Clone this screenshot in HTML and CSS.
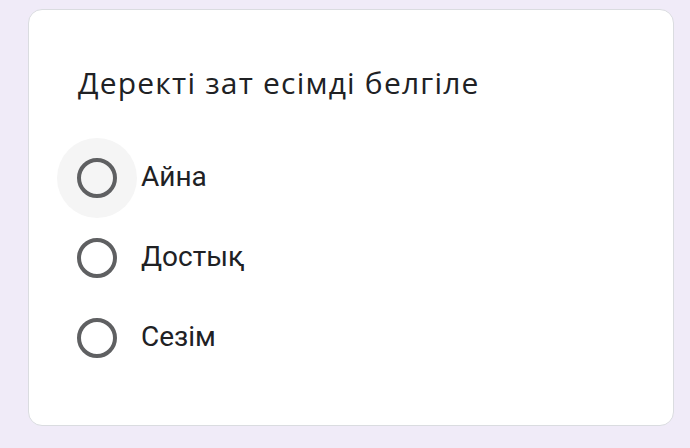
FILE: index.html
```html
<!DOCTYPE html>
<html lang="kk">
<head>
<meta charset="utf-8">
<link rel="stylesheet" href="styles.css">
</head>
<body>
<div class="card">
  <div class="title">Деректі зат есімді белгіле</div>
  <div class="options">
    <div class="option">
      <div class="halo hover"><span class="radio"></span></div>
      <span class="label">Айна</span>
    </div>
    <div class="option">
      <div class="halo"><span class="radio"></span></div>
      <span class="label">Достық</span>
    </div>
    <div class="option">
      <div class="halo"><span class="radio"></span></div>
      <span class="label">Сезім</span>
    </div>
  </div>
</div>
</body>
</html>
```

FILE: styles.css
```css
html, body {
  margin: 0;
  padding: 0;
}
body {
  background: #f0ebf8;
  width: 690px;
  height: 448px;
  overflow: hidden;
  padding-top: 9px;
  box-sizing: border-box;
}
.card {
  box-sizing: border-box;
  margin-left: 28px;
  width: 646px;
  height: 417px;
  background: #ffffff;
  border: 1px solid #dadce0;
  border-radius: 14px;
  padding: 53px 0 0 28px;
}
.title {
  font-family: "Open Sans", "Noto Sans", sans-serif;
  font-size: 30px;
  letter-spacing: 1.2px;
  line-height: 40px;
  color: #202124;
  padding-left: 21px;
}
.options {
  margin-top: 35px;
  display: flex;
  flex-direction: column;
}
.option {
  display: flex;
  align-items: center;
  height: 80px;
}
.halo {
  width: 80px;
  height: 80px;
  border-radius: 50%;
  display: flex;
  align-items: center;
  justify-content: center;
}
.halo.hover {
  background: #f5f5f5;
}
.radio {
  box-sizing: border-box;
  width: 40px;
  height: 40px;
  border: 4px solid #5f6062;
  border-radius: 50%;
}
.label {
  margin-left: 4px;
  padding-bottom: 3px;
  font-family: Roboto, "Liberation Sans", sans-serif;
  font-size: 28px;
  color: #202124;
}
```
